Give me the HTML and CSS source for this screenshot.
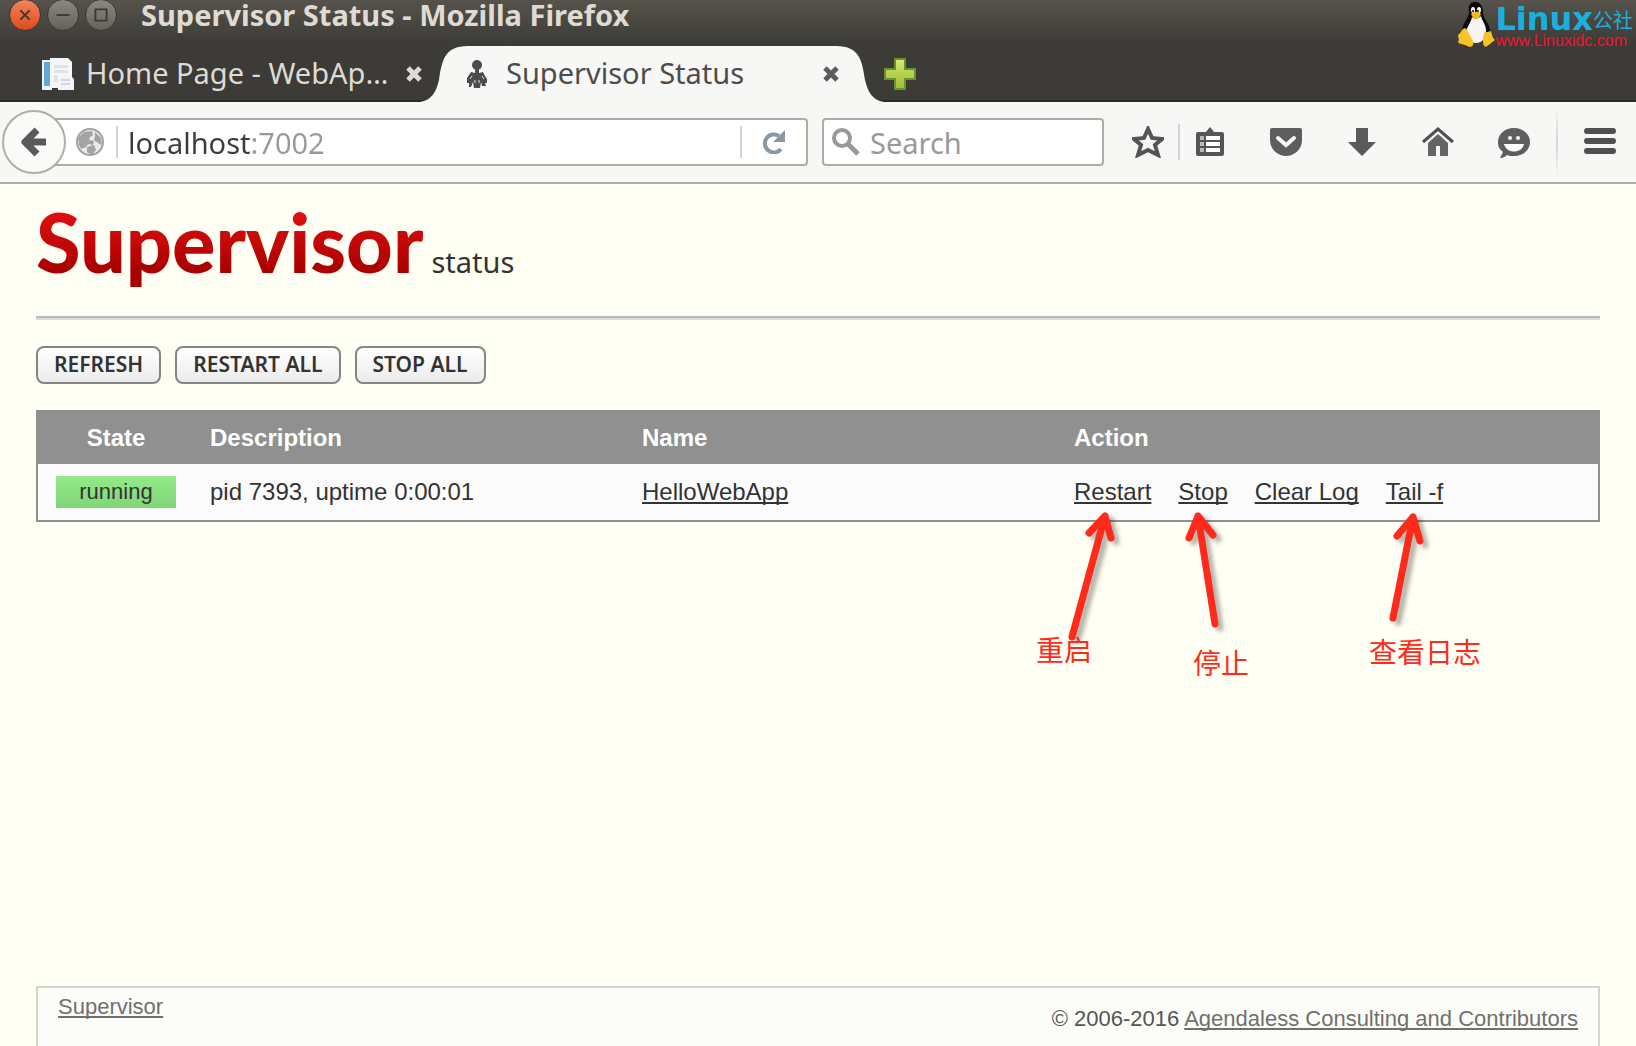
FILE: index.html
```html
<!DOCTYPE html>
<html lang="en">
<head>
  <meta charset="utf-8">
  <title>Supervisor Status</title>
  <meta name="viewport" content="width=device-width, initial-scale=1.0">
  <link rel="stylesheet" href="styles.css">
</head>
<body>
<header class="window-top">
  <div class="title-bar">
    <button class="win-btn win-close" aria-label="Close window"><svg viewBox="0 0 32 32"><path d="M11 11l10 10M21 11L11 21"/></svg></button>
    <button class="win-btn" aria-label="Minimize"><svg viewBox="0 0 32 32"><path d="M9 16h14"/></svg></button>
    <button class="win-btn" aria-label="Maximize"><svg viewBox="0 0 32 32"><path d="M10 10h12v12H10z"/></svg></button>
    <span class="window-title">Supervisor Status - Mozilla Firefox</span>
  </div>
  <div class="tabs">
    <div class="tab">
      <svg class="tab-icon" viewBox="0 0 32 32">
        <path d="M0 2h10v30H0z" fill="#eef3f8"/><path d="M2 4h6v24H2z" fill="#62a9db"/>
        <path d="M8 0h18l4 4v26H8z" fill="#f6f6f9"/><path d="M12 7h14v17H12z" fill="#dfe2e8"/>
        <path d="M12 11h14M12 16h14" stroke="#f6f6f9" stroke-width="2"/>
        <path d="M16 17h12l4 4v11H16z" fill="#f4f4f8"/><path d="M19 22h9M19 26h9" stroke="#d2d5de" stroke-width="2"/>
      </svg>
      <span class="tab-title">Home Page - WebAp…</span>
      <button class="tab-close" aria-label="Close tab"><svg viewBox="0 0 16 16"><path d="M2 2l12 12M14 2L2 14"/></svg></button>
    </div>
    <div class="tab active">
      <svg class="curve" viewBox="0 0 48 56"><path d="M0 56C12 54 16 46 19 34C22 15 24 0 48 0V56z"/></svg>
      <div class="tab-body">
        <svg class="tab-icon small" viewBox="0 0 20 28">
          <circle cx="10" cy="5" r="5"/><path d="M8 8h4v5l4-1 2 4 2 3v4h-2l1 3h-4l-1-4-1 6H7l-1-6-2 5H2v-4H0v-5l4-6 4 1z"/>
          <path d="M5 16l-2 3M15 16l2 3M8 20v3M12 20v3" stroke="#ddd"/>
        </svg>
        <span class="tab-title">Supervisor Status</span>
        <button class="tab-close" aria-label="Close tab"><svg viewBox="0 0 16 16"><path d="M2 2l12 12M14 2L2 14"/></svg></button>
      </div>
      <svg class="curve" viewBox="0 0 48 56"><path d="M48 56C36 54 32 46 29 34C26 15 24 0 0 0V56z"/></svg>
    </div>
    <button class="new-tab" aria-label="New tab">
      <svg viewBox="0 0 32 32">
        <defs><linearGradient id="plus" x2="0" y2="1"><stop stop-color="#d9ea78"/><stop offset=".5" stop-color="#b7d04c"/><stop offset="1" stop-color="#9fbf35"/></linearGradient></defs>
        <path d="M11 1h10v10h10v10H21v10H11V21H1V11h10z" fill="url(#plus)" stroke="#66942c" stroke-width="2"/>
      </svg>
    </button>
  </div>
  <div class="watermark">
    <svg class="tux" viewBox="0 0 38 46">
      <path d="M18 1c-6 0-7 5-6 10c0 6-7 11-7 20c0 5 3 10 14 10s15-4 14-11c0-8-7-12-7-19c0-5-2-10-8-10z" fill="#0b0b0b"/>
      <path d="M15 16c3 3 6 2 9-1c1 5 6 10 5 17c-1 6-4 10-10 10s-10-3-10-9c0-7 5-11 6-17z" fill="#f6f4f6"/>
      <ellipse cx="16" cy="9" rx="2" ry="3" fill="#fff"/><ellipse cx="22" cy="9" rx="2" ry="3" fill="#fff"/>
      <circle cx="16" cy="10" r="1"/><circle cx="21" cy="10" r="1"/>
      <path d="M14 13c3-3 7-3 10 0c-1 3-3 5-5 5s-4-2-5-5z" fill="#f5b81c"/>
      <path d="M6 28c-2 2-2 4-5 6c0 3 2 4 0 7c2 3 8 2 11 5c4 0 5-3 4-6l-6-11c-1-2-3-2-4-1z" fill="#f7c325"/>
      <path d="M28 30c-2 5-3 10-1 15c3 2 5-2 11-6c-4-3-2-7-5-9c-2 1-4 2-5 0z" fill="#f7c325"/>
    </svg>
    <div class="mark-text">
      <div class="mark-name"><b>Linux</b><span>公社</span></div>
      <div class="mark-url">www.Linuxidc.com</div>
    </div>
  </div>
</header>

<nav class="toolbar">
  <button class="back" aria-label="Back"><svg viewBox="0 0 30 32"><path d="M18 4L6 16l12 12M7 16h20"/></svg></button>
  <div class="url-bar">
    <svg class="globe" viewBox="0 0 28 28">
      <circle cx="14" cy="14" r="13" fill="#e9e9e9" stroke="#a3a3a3" stroke-width="2"/>
      <path d="M2 10l6-6 8-1 1 4-3 2-1 3 5 1-1 4-5-1-2 3-5 2-2-4zM19 4l6 6 1 7-4-2-4-3 1-4zM11 19l7-2 2 5-4 5-5-3z" fill="#a3a3a3"/>
    </svg>
    <i class="line"></i>
    <input class="url" type="text" value="localhost:7002" aria-label="Address">
    <i class="line"></i>
    <button class="reload" aria-label="Reload"><svg viewBox="0 0 24 24"><path d="M17 6A9 9 0 1 0 19 19" fill="none" stroke="#8a97a5" stroke-width="4"/><path d="M23 0v12H11z" fill="#8a97a5"/></svg></button>
  </div>
  <div class="search-bar">
    <svg viewBox="0 0 28 28"><circle cx="10" cy="10" r="8" fill="none" stroke="#999" stroke-width="4"/><path d="M16 16l10 10" stroke="#999" stroke-width="5"/></svg>
    <input type="text" placeholder="Search" aria-label="Search">
  </div>
  <div class="tools">
    <button aria-label="Bookmark"><svg viewBox="0 0 32 32"><path d="M16 3l4 9 10 1-7 6 3 10-10-5-10 5 3-10-7-6 10-1z" fill="none" stroke="#555" stroke-width="4"/></svg></button>
    <i class="line"></i>
    <button aria-label="Bookmarks list"><svg viewBox="0 0 32 32"><path d="M4 6h8l4-5 4 5h8q2 0 2 2v20q0 2-2 2H4q-2 0-2-2V8q0-2 2-2z" fill="#555"/><path d="M12 10h14v4H12zM12 16h14v4H12zM12 22h14v4H12z" fill="#fff"/><path d="M6 10h4v4H6zM6 16h4v4H6zM6 22h4v4H6z" fill="#bbb"/></svg></button>
    <button aria-label="Pocket"><svg viewBox="0 0 32 32"><path d="M2 2h28q2 0 2 2v10a16 16 0 0 1-32 0V4q0-2 2-2z" fill="#5e5e5e"/><path d="M8 12l8 7 8-7" fill="none" stroke="#f7f7f5" stroke-width="4" stroke-linecap="round"/></svg></button>
    <button aria-label="Downloads"><svg viewBox="0 0 32 32"><path d="M10 2h12v14h8L16 30 2 16h8z" fill="#5a5a5a"/></svg></button>
    <button aria-label="Home"><svg viewBox="0 0 32 32"><path d="M1 16L16 3l15 13" fill="none" stroke="#505050" stroke-width="3"/><path d="M16 8l10 9v13h-8V20h-4v10H6V17z" fill="#646464"/></svg></button>
    <button aria-label="Chat"><svg viewBox="0 0 32 32"><path d="M16 2c9 0 16 6 16 14s-7 14-16 14c-3 0-5 0-7-1-2 2-4 3-7 3l3-6C1 23 0 20 0 16 0 8 7 2 16 2z" fill="#5e5e5e"/><circle cx="12" cy="12" r="2" fill="#fff"/><circle cx="20" cy="12" r="2" fill="#fff"/><path d="M6 18h20c-2 10-18 10-20 0z" fill="#fff"/></svg></button>
  </div>
  <i class="menu-line"></i>
  <button class="menu" aria-label="Menu"><svg viewBox="0 0 32 32"><path d="M3 5h26M3 15h26M3 25h26" stroke="#505050" stroke-width="6" stroke-linecap="round"/></svg></button>
</nav>

<main class="page">
  <h1 class="logo"><span class="logo-name">Supervisor</span> <span class="logo-status">status</span></h1>
  <div class="actions">
    <button>REFRESH</button>
    <button>RESTART ALL</button>
    <button>STOP ALL</button>
  </div>
  <table class="programs">
    <thead>
      <tr><th class="state">State</th><th class="desc">Description</th><th class="name">Name</th><th>Action</th></tr>
    </thead>
    <tbody>
      <tr>
        <td class="state"><span class="running">running</span></td>
        <td>pid 7393, uptime 0:00:01</td>
        <td><a href="#">HelloWebApp</a></td>
        <td>
          <div class="links">
            <a href="#">Restart</a>
            <a href="#">Stop</a>
            <a href="#">Clear Log</a>
            <a href="#">Tail -f</a>
          </div>
        </td>
      </tr>
    </tbody>
  </table>

  <!-- notes drawn over the action links -->
  <div class="notes">
    <svg viewBox="0 0 460 140">
      <g class="arrow"><path d="M37 129L70 8M54 25L70 8L76 30"/></g>
      <g class="arrow"><path d="M180 116L163 8M154 30L163 8L178 27"/></g>
      <g class="arrow"><path d="M358 110L378 9M362 28L378 9L385 33"/></g>
    </svg>
    <span class="note note-restart">重启</span>
    <span class="note note-stop">停止</span>
    <span class="note note-tail">查看日志</span>
  </div>

  <footer class="footer">
    <a href="#">Supervisor</a>
    <div class="copyright">© 2006-2016 <a href="#">Agendaless Consulting and Contributors</a></div>
  </footer>
</main>
</body>
</html>
```
FILE: styles.css
```css
* {
  box-sizing: border-box;
}
body {
  margin: 0;
  height: 100vh;
  overflow: hidden;
  display: flex;
  flex-direction: column;
  background: #fffff3;
  color: #333;
  font-family: "Liberation Sans", Arial, sans-serif;
  font-size: 24px;
}
button {
  border: none;
  background: none;
  padding: 0;
  cursor: pointer;
}
svg {
  display: block;
}
.line {
  width: 2px;
  height: 32px;
  background: #d2d2d2;
}

/* window top */
.window-top {
  position: relative;
  background: linear-gradient(#56534b, #3c3b37 44px);
  border-bottom: 2px solid #2b2a27;
  font-family: "Noto Sans", "Open Sans", sans-serif;
}
.title-bar {
  display: flex;
  align-items: center;
  height: 30px;
  padding-left: 9px;
  gap: 6px;
}
.win-btn {
  width: 32px;
  height: 32px;
  border-radius: 50%;
  border: 1px solid #3a3935;
  background: linear-gradient(#8a8880, #64625b);
}
.win-close {
  background: linear-gradient(#f5825c, #de4b1b);
}
.win-btn path {
  fill: none;
  stroke: #3a3935;
  stroke-width: 2;
}
.window-title {
  margin-left: 18px;
  line-height: 30px;
  font-size: 29px;
  font-weight: bold;
  color: #dfdbd2;
}
.tabs {
  display: flex;
  height: 56px;
  margin-top: 16px;
  margin-bottom: -2px;
}
.tab {
  display: flex;
  align-items: center;
  width: 420px;
  padding-left: 42px;
  color: #dfdbd2;
  font-size: 29px;
}
.tab.active {
  width: 464px;
  padding-left: 0;
  color: #4c4c4c;
}
.tab-icon {
  width: 32px;
  height: 32px;
  margin-right: 12px;
}
.tab-icon.small {
  width: 20px;
  height: 28px;
  margin-right: 19px;
  fill: #4c4c4c;
}
.tab-title {
  flex: 1;
  line-height: 54px;
  padding-bottom: 2px;
  white-space: nowrap;
}
.tab-close svg {
  width: 16px;
  height: 16px;
  stroke: #dfdbd2;
  stroke-width: 5;
}
.active .tab-close svg {
  stroke: #5c5c5c;
}
.tab > .tab-close {
  width: 32px;
  padding: 0 8px;
  margin-right: -10px;
}
.curve {
  width: 48px;
  height: 56px;
  fill: #f7f7f5;
}
.tab-body {
  z-index: 1;
  flex: 1;
  display: flex;
  align-items: center;
  height: 56px;
  margin: 0 -1px;
  background: #f7f7f5;
}
.tab-body .tab-close {
  margin-right: -2px;
}
.new-tab svg {
  width: 32px;
  height: 32px;
}
.watermark {
  position: absolute;
  top: 1px;
  right: 3px;
  display: flex;
}
.tux {
  width: 38px;
  height: 46px;
}
.mark-name {
  display: flex;
  align-items: center;
  height: 32px;
  line-height: 32px;
  padding-top: 4px;
  color: #19b0e0;
  font-family: "DejaVu Sans", "Noto Sans CJK SC", sans-serif;
  font-size: 32px;
}
.mark-name span {
  font-size: 20px;
  line-height: 20px;
  margin-top: 4px;
}
.mark-url {
  height: 16px;
  line-height: 16px;
  color: #f0142f;
  font-family: "Liberation Sans", Arial, sans-serif;
  font-size: 16px;
}

/* toolbar */
.toolbar {
  display: flex;
  align-items: center;
  height: 82px;
  padding: 0 20px 0 2px;
  background: #f7f7f5;
  border-bottom: 2px solid #b0ada8;
  font-family: "Noto Sans", "Open Sans", sans-serif;
}
.back {
  z-index: 1;
  width: 64px;
  height: 64px;
  border: 2px solid #b5aca8;
  border-radius: 50%;
  background: #fafaf8;
}
.back svg {
  width: 30px;
  height: 32px;
  margin: 0 auto;
  fill: none;
  stroke: #5a5a5a;
  stroke-width: 7;
  stroke-linejoin: round;
}
.url-bar,
.search-bar {
  display: flex;
  align-items: center;
  height: 48px;
  border: 2px solid #b0aba5;
  border-radius: 4px;
  background: #fff;
}
.url-bar {
  flex: 1;
  margin-left: -32px;
  padding-left: 40px;
}
.globe {
  width: 28px;
  height: 28px;
  margin-right: 12px;
}
.toolbar input {
  flex: 1;
  min-width: 0;
  padding: 0;
  border: none;
  outline: none;
  background: none;
  font-family: inherit;
  font-size: 29px;
}
/* host is dark, port is grey */
.toolbar .url {
  height: 44px;
  margin-left: 10px;
  background: linear-gradient(90deg, #3c3c3c 122px, #999 122px);
  -webkit-background-clip: text;
  background-clip: text;
  color: transparent;
}
.reload {
  width: 64px;
}
.reload svg {
  width: 24px;
  height: 24px;
  margin: 0 auto;
}
.search-bar {
  width: 282px;
  margin-left: 14px;
  padding-left: 8px;
}
.search-bar svg {
  width: 28px;
  height: 28px;
  margin-right: 10px;
}
.search-bar input::placeholder {
  color: #999;
}
.tools {
  display: flex;
  align-items: center;
  gap: 44px;
  margin-left: 28px;
}
.tools .line {
  height: 36px;
  margin: 0 -30px;
}
.tools svg,
.menu svg {
  width: 32px;
  height: 32px;
}
.menu-line {
  width: 2px;
  height: 72px;
  margin: 0 26px 0 26px;
  background: linear-gradient(transparent, #d2d2d2, transparent);
}

/* page */
.page {
  position: relative;
  flex: 1;
  display: flex;
  flex-direction: column;
  padding: 0 36px;
}
.logo {
  display: flex;
  align-items: baseline;
  gap: 8px;
  height: 134px;
  margin: 0;
  border-bottom: 2px solid #b9b9b9;
  box-shadow: 0 2px #dcdcdc;
  line-height: 116px;
}
.logo-name {
  font-family: Lato, sans-serif;
  font-size: 81px;
  font-weight: 900;
  background: linear-gradient(#e01010 25%, #a80000 75%);
  -webkit-background-clip: text;
  background-clip: text;
  color: transparent;
}
.logo-status {
  font-family: "Noto Sans", sans-serif;
  font-size: 29px;
  font-weight: normal;
}
.actions {
  display: flex;
  gap: 14px;
  margin: 28px 0 26px;
}
.actions button {
  height: 38px;
  padding: 0 16px 2px;
  border: 2px solid #858585;
  border-radius: 8px;
  background: linear-gradient(#fff, #ebebeb);
  color: #333;
  font-family: "Noto Sans", sans-serif;
  font-size: 21px;
  font-weight: 600;
}
.programs {
  width: 100%;
  table-layout: fixed;
  border: 2px solid #909090;
  border-spacing: 0;
  background: #fbfbfb;
}
.programs th {
  height: 52px;
  padding: 0 16px;
  background: #909090;
  color: #fff;
  text-align: left;
}
.programs td {
  height: 56px;
  padding: 0 16px;
}
.programs .state {
  width: 10%;
  text-align: center;
}
.desc,
.name {
  width: 432px;
}
.running {
  display: block;
  height: 32px;
  margin: 0 2px;
  line-height: 32px;
  font-size: 22px;
  background: linear-gradient(#94e98a, #80d577);
}
.links {
  display: flex;
  gap: 27px;
}
a {
  color: inherit;
  text-decoration-thickness: 2px;
  text-underline-offset: 2px;
  text-decoration-skip-ink: none;
}
.notes {
  position: absolute;
  top: 324px;
  left: 1035px;
  width: 460px;
  color: #ff2a1a;
}
.arrow {
  fill: none;
  stroke: #ff2a1a;
  stroke-width: 7;
  stroke-linecap: round;
  stroke-linejoin: round;
  filter: drop-shadow(5px 4px 2px rgba(0, 0, 0, 0.3));
}
.note {
  position: absolute;
  font-family: "Liberation Sans", "Noto Sans CJK SC", sans-serif;
  font-size: 28px;
  line-height: 32px;
}
.note-restart {
  top: 128px;
  left: 1px;
}
.note-stop {
  top: 141px;
  left: 158px;
}
.note-tail {
  top: 130px;
  left: 334px;
}
.footer {
  display: flex;
  justify-content: space-between;
  height: 60px;
  margin-top: auto;
  padding: 6px 20px 0;
  border: 2px solid #d5d6ce;
  border-bottom: none;
  background: #fcfdf8;
  color: #555;
  font-size: 22px;
}
.footer a {
  color: #707070;
}
.copyright {
  margin-top: 12px;
}
```
